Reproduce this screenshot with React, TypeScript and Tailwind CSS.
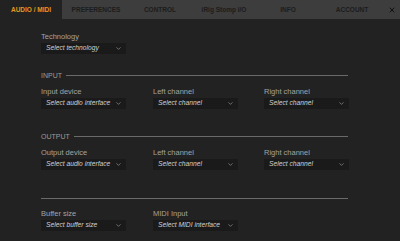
import { ChevronDown, X } from 'lucide-react'

const tabs = ['AUDIO / MIDI', 'PREFERENCES', 'CONTROL', 'iRig Stomp I/O', 'INFO', 'ACCOUNT']

function Select({ text }: { text: string }) {
  return (
    <div className="flex items-center justify-between w-[85px] h-[11px] bg-[#1a1a1a] pl-[5px] pr-[4px]">
      <span className="italic text-[6.7px] text-[#d0d0d0] leading-none">{text}</span>
      <ChevronDown className="w-[7px] h-[7px] text-[#bbbbbb]" strokeWidth={1.75} />
    </div>
  )
}

function Field({ label, value }: { label: string; value: string }) {
  return (
    <div className="flex flex-col">
      <div className="text-[7.5px] text-[#a2a2a2] leading-[7px] mb-[3px]">{label}</div>
      <Select text={value} />
    </div>
  )
}

function Section({ title }: { title: string }) {
  return (
    <div className="flex items-center w-[307px] h-[7px]">
      <span className="text-[7px] text-[#9c9c9c] leading-none mr-[4px]">{title}</span>
      <div className="flex-1 h-px bg-[#6a6a6a]" />
    </div>
  )
}

function Row({ first, firstValue }: { first: string; firstValue: string }) {
  return (
    <div className="grid grid-cols-[112px_111px_85px]">
      <Field label={first} value={firstValue} />
      <Field label="Left channel" value="Select channel" />
      <Field label="Right channel" value="Select channel" />
    </div>
  )
}

export default function App() {
  return (
    <div className="w-[400px] h-[241px] bg-[#222222] overflow-hidden" style={{ fontFamily: '"Liberation Sans", Arial, sans-serif' }}>
      <div className="flex h-[19px] bg-[#3d3d3d]">
        {tabs.map((t, i) => (
          <div
            key={t}
            className={
              i === 0
                ? 'w-[62px] mr-[2px] flex items-center justify-center bg-[#222222] text-[#e39a1c] font-bold text-[6.5px]'
                : 'w-[64px] flex items-center justify-center text-[#1c1c1c] font-bold text-[6.5px]'
            }
          >
            {t}
          </div>
        ))}
        <div className="flex-1 flex items-center justify-center">
          <X className="w-[8px] h-[8px] text-[#111111]" strokeWidth={3} />
        </div>
      </div>

      <div className="pl-[41px] pt-[14px]">
        <Field label="Technology" value="Select technology" />

        <div className="mt-[18px]">
          <Section title="INPUT" />
        </div>
        <div className="mt-[9px]">
          <Row first="Input device" firstValue="Select audio interface" />
        </div>

        <div className="mt-[24px]">
          <Section title="OUTPUT" />
        </div>
        <div className="mt-[9px]">
          <Row first="Output device" firstValue="Select audio interface" />
        </div>

        <div className="mt-[28px] w-[307px] h-px bg-[#6a6a6a]" />

        <div className="mt-[11px] grid grid-cols-[112px_85px]">
          <Field label="Buffer size" value="Select buffer size" />
          <Field label="MIDI Input" value="Select MIDI interface" />
        </div>
      </div>
    </div>
  )
}
